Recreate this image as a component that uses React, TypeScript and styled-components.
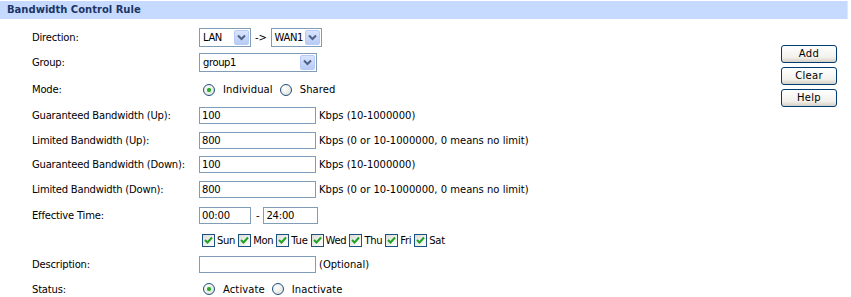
import styled, { createGlobalStyle } from 'styled-components';

const GlobalStyle = createGlobalStyle`
  body {
    margin: 0;
    background: #ffffff;
    font-family: "DejaVu Sans", Verdana, sans-serif;
    font-size: 10px;
    letter-spacing: -0.2px;
    color: #000000;
  }
`;

const PanelStyled = styled.div`
  width: 851px;
  height: 297px;
  overflow: hidden;
`;

const HeaderStyled = styled.div`
  margin-top: 1px;
  margin-right: 3px;
  height: 18px;
  line-height: 18px;
  padding-left: 7px;
  background: #c6daff;
  border-right: 1px solid #dde8ff;
  color: #1c3566;
  font-weight: 700;
  font-size: 10px;
  letter-spacing: 0;
`;

const BodyStyled = styled.div`
  display: flex;
  align-items: flex-start;
`;

const FormStyled = styled.div`
  flex: 1;
  padding-top: 6px;
  padding-left: 32px;
`;

const RowStyled = styled.div<{ $h: number }>`
  display: grid;
  grid-template-columns: 167px 1fr;
  align-items: center;
  height: ${(p) => p.$h}px;
`;

const LabelStyled = styled.div`
  white-space: nowrap;
`;

const FieldStyled = styled.div<{ $indent?: number }>`
  display: flex;
  align-items: center;
  white-space: nowrap;
  padding-left: ${(p) => p.$indent ?? 0}px;
`;

const TextBoxStyled = styled.div<{ $w?: number }>`
  box-sizing: border-box;
  width: ${(p) => p.$w ?? 117}px;
  height: 17px;
  line-height: 15px;
  padding-left: 2px;
  border: 1px solid #7f9db9;
  background: #ffffff;
  margin-right: 2px;
`;

const HintStyled = styled.span`
  margin-left: 1px;
  letter-spacing: 0;
`;

const SelectStyled = styled.div<{ $w: number }>`
  box-sizing: border-box;
  width: ${(p) => p.$w}px;
  height: 19px;
  border: 1px solid #7f9db9;
  background: #ffffff;
  display: flex;
  align-items: center;
  justify-content: space-between;
  padding: 1px 1px 1px 3px;
  letter-spacing: -0.4px;
`;

const SelectButtonStyled = styled.div`
  box-sizing: border-box;
  width: 15px;
  height: 15px;
  flex-shrink: 0;
  border: 1px solid #b9ccf7;
  border-radius: 2px;
  background: linear-gradient(#d9e5fd, #b7cbf6);
  display: flex;
  align-items: center;
  justify-content: center;
`;

const SeparatorStyled = styled.span<{ $gap: string }>`
  margin: ${(p) => p.$gap};
`;

const RadioStyled = styled.span<{ $on?: boolean }>`
  box-sizing: border-box;
  display: inline-flex;
  align-items: center;
  justify-content: center;
  width: 12px;
  height: 12px;
  border-radius: 50%;
  border: 1px solid #1c5180;
  background: radial-gradient(circle at 35% 35%, #ffffff, #dcdcd4);
  margin: 0 8px 0 4px;

  &::after {
    content: '';
    display: ${(p) => (p.$on ? 'block' : 'none')};
    width: 4px;
    height: 4px;
    border-radius: 50%;
    background: #2fa72f;
    box-shadow: 0 0 1px #5fd05f;
  }
`;

const RadioTextStyled = styled.span`
  margin-right: 3px;
  letter-spacing: 0.1px;
`;

const CheckStyled = styled.span`
  box-sizing: border-box;
  display: inline-flex;
  align-items: center;
  justify-content: center;
  width: 13px;
  height: 13px;
  border: 1px solid #1c5180;
  background: linear-gradient(135deg, #dcdcd7, #ffffff);
  margin-right: 2px;
`;

const DayStyled = styled.span`
  margin-right: 3px;
  letter-spacing: -0.3px;
`;

const ButtonColumnStyled = styled.div`
  display: flex;
  flex-direction: column;
  gap: 4px;
  padding-top: 26px;
  margin-right: 14px;
`;

const ButtonStyled = styled.div`
  box-sizing: border-box;
  width: 56px;
  height: 18px;
  line-height: 16px;
  text-align: center;
  border: 1px solid #003c74;
  border-radius: 3px;
  background: linear-gradient(#ffffff, #f2f1ec 70%, #d6d0c5);
  letter-spacing: 0.3px;
`;

const Chevron = () => (
  <svg width="9" height="7" viewBox="0 0 9 7">
    <path d="M1 1.5 L4.5 5 L8 1.5" fill="none" stroke="#4d6185" strokeWidth="2" />
  </svg>
);

const Tick = () => (
  <svg width="9" height="9" viewBox="0 0 9 9">
    <path d="M1 4 L3.5 6.5 L8 1.5" fill="none" stroke="#21a121" strokeWidth="2" />
  </svg>
);

const Select = ({ value, width }: { value: string; width: number }) => (
  <SelectStyled $w={width}>
    <span>{value}</span>
    <SelectButtonStyled>
      <Chevron />
    </SelectButtonStyled>
  </SelectStyled>
);

const days = ['Sun', 'Mon', 'Tue', 'Wed', 'Thu', 'Fri', 'Sat'];

const App = () => (
  <PanelStyled>
    <GlobalStyle />
    <HeaderStyled>Bandwidth Control Rule</HeaderStyled>
    <BodyStyled>
      <FormStyled>
        <RowStyled $h={24}>
          <LabelStyled>Direction:</LabelStyled>
          <FieldStyled>
            <Select value="LAN" width={52} />
            <SeparatorStyled $gap="0 4px">-&gt;</SeparatorStyled>
            <Select value="WAN1" width={51} />
          </FieldStyled>
        </RowStyled>
        <RowStyled $h={27}>
          <LabelStyled>Group:</LabelStyled>
          <FieldStyled>
            <Select value="group1" width={118} />
          </FieldStyled>
        </RowStyled>
        <RowStyled $h={27}>
          <LabelStyled>Mode:</LabelStyled>
          <FieldStyled>
            <RadioStyled $on />
            <RadioTextStyled>Individual</RadioTextStyled>
            <RadioStyled />
            <RadioTextStyled>Shared</RadioTextStyled>
          </FieldStyled>
        </RowStyled>
        <RowStyled $h={25}>
          <LabelStyled>Guaranteed Bandwidth (Up):</LabelStyled>
          <FieldStyled>
            <TextBoxStyled>100</TextBoxStyled>
            <HintStyled>Kbps (10-1000000)</HintStyled>
          </FieldStyled>
        </RowStyled>
        <RowStyled $h={24}>
          <LabelStyled>Limited Bandwidth (Up):</LabelStyled>
          <FieldStyled>
            <TextBoxStyled>800</TextBoxStyled>
            <HintStyled>Kbps (0 or 10-1000000, 0 means no limit)</HintStyled>
          </FieldStyled>
        </RowStyled>
        <RowStyled $h={25}>
          <LabelStyled>Guaranteed Bandwidth (Down):</LabelStyled>
          <FieldStyled>
            <TextBoxStyled>100</TextBoxStyled>
            <HintStyled>Kbps (10-1000000)</HintStyled>
          </FieldStyled>
        </RowStyled>
        <RowStyled $h={25}>
          <LabelStyled>Limited Bandwidth (Down):</LabelStyled>
          <FieldStyled>
            <TextBoxStyled>800</TextBoxStyled>
            <HintStyled>Kbps (0 or 10-1000000, 0 means no limit)</HintStyled>
          </FieldStyled>
        </RowStyled>
        <RowStyled $h={26}>
          <LabelStyled>Effective Time:</LabelStyled>
          <FieldStyled>
            <TextBoxStyled $w={52}>00:00</TextBoxStyled>
            <SeparatorStyled $gap="0 4px 0 3px">-</SeparatorStyled>
            <TextBoxStyled $w={55}>24:00</TextBoxStyled>
          </FieldStyled>
        </RowStyled>
        <RowStyled $h={24}>
          <LabelStyled />
          <FieldStyled $indent={3}>
            {days.map((d) => (
              <span key={d} style={{ display: 'contents' }}>
                <CheckStyled>
                  <Tick />
                </CheckStyled>
                <DayStyled>{d}</DayStyled>
              </span>
            ))}
          </FieldStyled>
        </RowStyled>
        <RowStyled $h={24}>
          <LabelStyled>Description:</LabelStyled>
          <FieldStyled>
            <TextBoxStyled>&nbsp;</TextBoxStyled>
            <HintStyled>(Optional)</HintStyled>
          </FieldStyled>
        </RowStyled>
        <RowStyled $h={26}>
          <LabelStyled>Status:</LabelStyled>
          <FieldStyled>
            <RadioStyled $on />
            <RadioTextStyled>Activate</RadioTextStyled>
            <RadioStyled />
            <RadioTextStyled>Inactivate</RadioTextStyled>
          </FieldStyled>
        </RowStyled>
      </FormStyled>
      <ButtonColumnStyled>
        <ButtonStyled>Add</ButtonStyled>
        <ButtonStyled>Clear</ButtonStyled>
        <ButtonStyled>Help</ButtonStyled>
      </ButtonColumnStyled>
    </BodyStyled>
  </PanelStyled>
);

export default App;
